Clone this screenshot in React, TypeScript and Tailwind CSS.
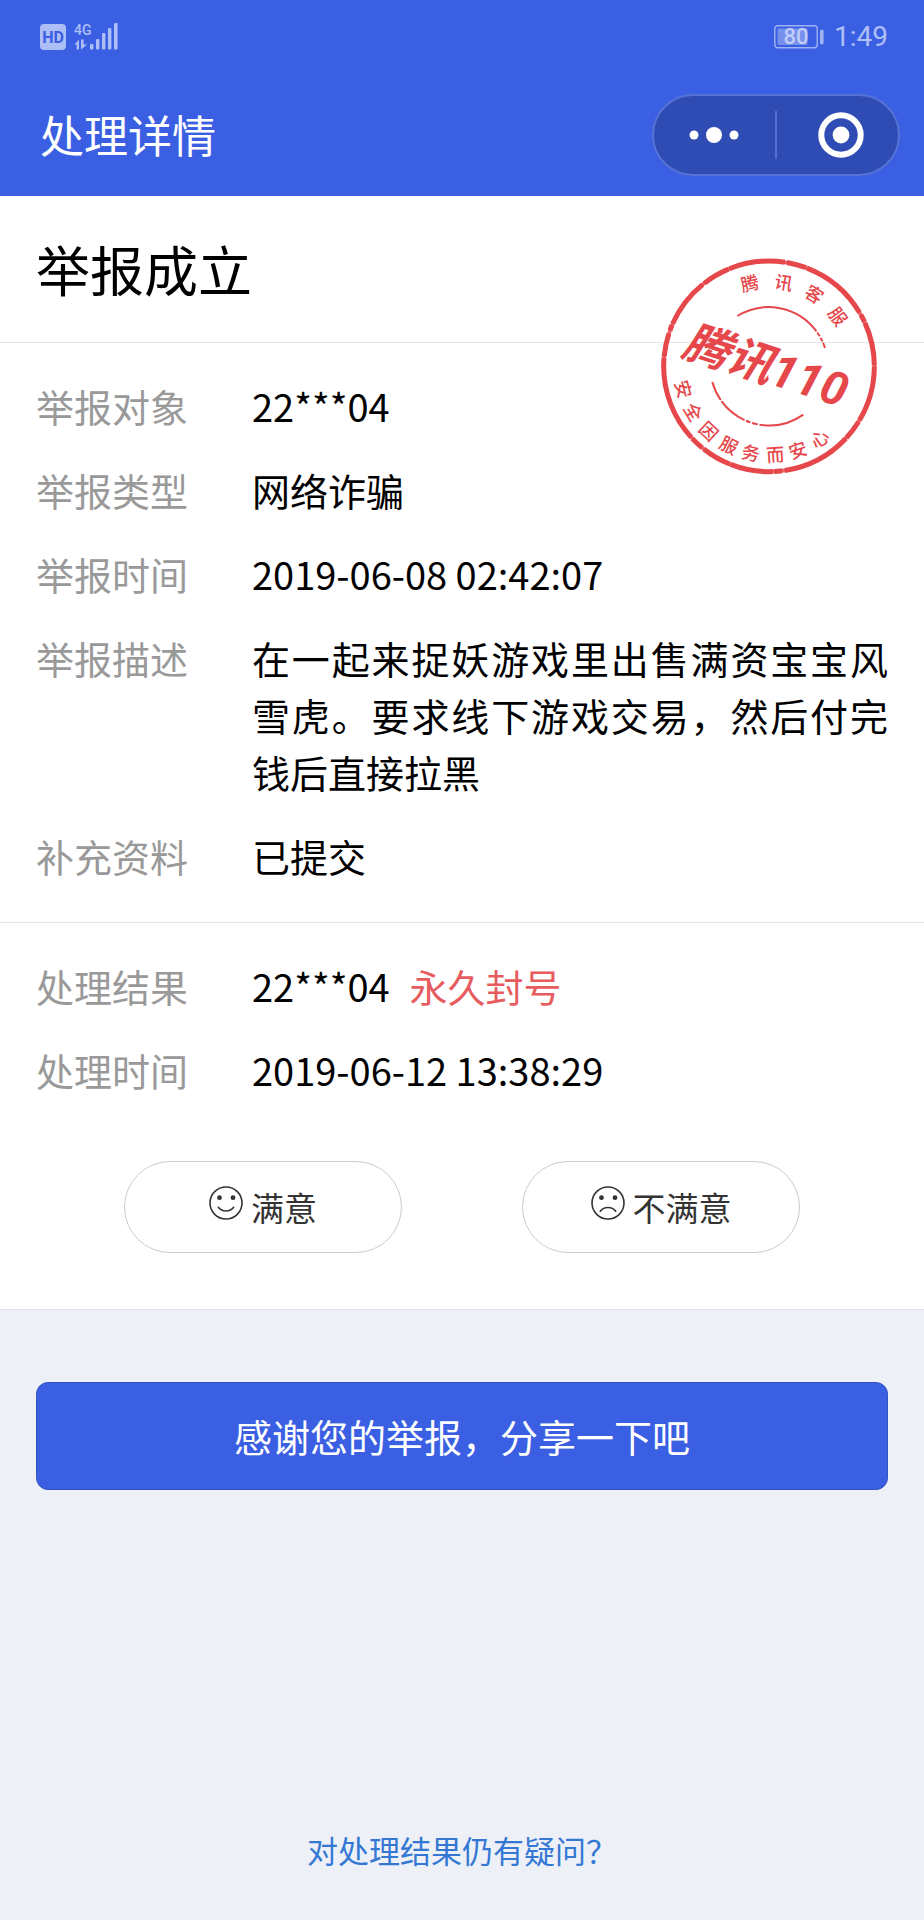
import type { ReactNode } from 'react'

interface Field {
  label: string
  value: ReactNode
}

interface StampChar {
  char: string
  angle: number
}

const reportFields: Field[] = [
  { label: '举报对象', value: '22***04' },
  { label: '举报类型', value: '网络诈骗' },
  { label: '举报时间', value: '2019-06-08 02:42:07' },
  { label: '举报描述', value: '在一起来捉妖游戏里出售满资宝宝风雪虎。要求线下游戏交易，然后付完钱后直接拉黑' },
  { label: '补充资料', value: '已提交' },
]

const resultFields: Field[] = [
  {
    label: '处理结果',
    value: (
      <>
        22***04<span className="ml-5 text-[#e65c5f]">永久封号</span>
      </>
    ),
  },
  { label: '处理时间', value: '2019-06-12 13:38:29' },
]

// Angles are degrees clockwise from the top of the seal
const stampTop: StampChar[] = [
  { char: '腾', angle: -13 },
  { char: '讯', angle: 10 },
  { char: '客', angle: 32 },
  { char: '服', angle: 54 },
]

// Angles are degrees clockwise from the bottom of the seal
const stampBottom: StampChar[] = [
  { char: '安', angle: 75 },
  { char: '全', angle: 59 },
  { char: '因', angle: 43 },
  { char: '服', angle: 27 },
  { char: '务', angle: 12 },
  { char: '而', angle: -4 },
  { char: '安', angle: -19 },
  { char: '心', angle: -35 },
]

function SignalIcon() {
  return (
    <svg viewBox="0 0 80 28" className="w-20 h-7" fill="#adbdf5" aria-hidden="true">
      <rect x="0" y="1" width="26" height="26" rx="4" />
      <text x="13" y="20" textAnchor="middle" fontFamily="Roboto" fontSize="16" fontWeight="700" fill="#3a5fe3">HD</text>
      <text x="34" y="12" fontFamily="Roboto" fontSize="14" fontWeight="500">4G</text>
      <path d="M34.5 21.5 39 16.5v10h-2.4v-5zM41 16.5v10l6.2-5h-3.6v-5z" />
      <rect x="50" y="21" width="3.4" height="5.5" rx="1" />
      <rect x="56" y="16" width="3.4" height="10.5" rx="1" />
      <rect x="62" y="10" width="3.4" height="16.5" rx="1" />
      <rect x="68" y="5" width="3.4" height="21.5" rx="1" />
      <rect x="74" y="0" width="3.6" height="26.5" rx="1" />
    </svg>
  )
}

function BatteryIcon() {
  return (
    <svg viewBox="0 0 50 24" className="w-[50px] h-6" aria-hidden="true">
      <rect x="0.8" y="0.8" width="42.4" height="22" rx="3" fill="none" stroke="#9fb2f3" strokeWidth="1.4" />
      <rect x="3.5" y="3.5" width="30" height="16.5" rx="1" fill="#7790eb" />
      <rect x="46" y="4.5" width="3.6" height="15" rx="1.8" fill="#9fb2f3" />
      <text x="22" y="19.4" textAnchor="middle" fontFamily="Roboto" fontSize="22" fontWeight="500" fill="#c0cdf8">80</text>
    </svg>
  )
}

function FaceIcon({ happy }: { happy: boolean }) {
  return (
    <svg viewBox="0 0 34 34" className="w-[34px] h-[34px] mb-2" fill="none" stroke="#333" strokeWidth="1.6" aria-hidden="true">
      <circle cx="17" cy="17" r="16" />
      <circle cx="10.5" cy="11.7" r="2.4" fill="#333" stroke="none" />
      <circle cx="24" cy="11.7" r="2.4" fill="#333" stroke="none" />
      <path d={happy ? 'M9.3 21.3c3.8 5 11.6 5 15.4 0' : 'M9.3 25.3c3.8-5 11.6-5 15.4 0'} strokeLinecap="round" />
    </svg>
  )
}

function Stamp() {
  return (
    <svg
      viewBox="57 49 660 660"
      className="absolute right-11 top-[60px] w-[220px] h-[220px]"
      fill="#e5474b"
      fontFamily='"Noto Sans CJK SC", sans-serif'
      role="img"
      aria-label="腾讯110"
    >
      <g transform="translate(384 380)">
        <g fill="none" stroke="#e5474b">
          <circle r="316" strokeWidth="11" opacity="0.85" />
          <circle r="316" strokeWidth="15" strokeDasharray="170 5 60 3 210 8 24 4 130 3 90 6 40 5 260 4 70 9 18 4 150 5 85 3" />
          <path d="M-95-151A178 178 0 0 1 168-55" strokeWidth="6" strokeDasharray="265 4 14 5 12 4 40" />
          <path d="M-170 47A177 177 0 0 0 103 145" strokeWidth="6" strokeDasharray="60 4 90 5 14 5 18 5 200" />
        </g>
        {stampTop.map(({ char, angle }) => (
          <text key={char} transform={`rotate(${angle})`} y="-235" textAnchor="middle" fontSize="54" fontWeight="500">
            {char}
          </text>
        ))}
        {stampBottom.map(({ char, angle }) => (
          <text key={angle} transform={`rotate(${angle})`} y="286" textAnchor="middle" fontSize="54" fontWeight="500">
            {char}
          </text>
        ))}
        <text transform="rotate(18)" x="-10" y="50" textAnchor="middle" fontSize="138" fontWeight="700" fontStyle="italic">
          腾讯
          <tspan fontFamily="Roboto" fontSize="140">110</tspan>
        </text>
      </g>
    </svg>
  )
}

function FieldList({ fields }: { fields: Field[] }) {
  return (
    <dl className="flex flex-col gap-[27px] text-[38px] leading-[57px]">
      {fields.map(({ label, value }) => (
        <div key={label} className="flex">
          <dt className="w-54 shrink-0 text-[#999]">{label}</dt>
          <dd className="flex-1 text-justify text-black">{value}</dd>
        </div>
      ))}
    </dl>
  )
}

export default function App() {
  return (
    <div lang="zh-CN" className="flex min-h-screen flex-col bg-[#edf0f7] font-['Noto_Sans_CJK_SC',sans-serif]">
      <header className="bg-[#3a5fe3]">
        {/* Status bar */}
        <div className="flex h-[74px] items-center justify-between pl-10 pr-9">
          <SignalIcon />
          <div className="flex items-center gap-2.5">
            <BatteryIcon />
            <span className="font-[Roboto,sans-serif] text-[28px] leading-8 text-[#b0c0f6]">1:49</span>
          </div>
        </div>

        {/* Title bar */}
        <div className="flex h-[122px] items-center justify-between pl-10 pr-6">
          <h1 className="pb-0.5 text-[44px] leading-14 text-white">处理详情</h1>
          <div className="flex h-[82px] w-[248px] items-center rounded-full border-2 border-[#5672d4] bg-[#2f4bb4]">
            <button type="button" aria-label="更多" className="flex w-1/2 justify-center">
              <svg viewBox="0 0 50 16" className="w-[50px] h-4" fill="#fff">
                <circle cx="5" cy="8" r="4.5" />
                <circle cx="25" cy="8" r="8" />
                <circle cx="45" cy="8" r="4.5" />
              </svg>
            </button>
            <div className="h-12 w-0.5 bg-[#5570d2]" />
            <button type="button" aria-label="关闭" className="flex w-1/2 justify-center pl-2">
              <svg viewBox="0 0 46 46" className="w-[46px] h-[46px]">
                <circle cx="23" cy="23" r="19.7" fill="none" stroke="#fff" strokeWidth="6" />
                <circle cx="23" cy="23" r="8.4" fill="#fff" />
              </svg>
            </button>
          </div>
        </div>
      </header>

      <main className="relative border-b border-[#e2e3e6] bg-white">
        <h2 className="border-b border-[#e5e5e5] px-9 py-9 text-[54px] leading-[74px] text-black">举报成立</h2>

        <section className="border-b border-[#e5e5e5] px-9 pt-[34px] pb-[38px]">
          <FieldList fields={reportFields} />
        </section>

        <section className="px-9 pt-[34px] pb-14">
          <FieldList fields={resultFields} />
          <div className="mt-[63px] flex gap-30 px-22 text-[33px] leading-12 text-[#333]">
            <button type="button" className="flex h-[92px] flex-1 items-center justify-center gap-2 rounded-full border border-[#ccc]">
              <FaceIcon happy />
              满意
            </button>
            <button type="button" className="flex h-[92px] flex-1 items-center justify-center gap-2 rounded-full border border-[#ccc]">
              <FaceIcon happy={false} />
              不满意
            </button>
          </div>
        </section>

        <Stamp />
      </main>

      <div className="px-9 pt-18">
        <button type="button" className="h-27 w-full rounded-xl border border-[#3453c4] bg-[#3a5fe3] text-[38px] leading-14 text-white">
          感谢您的举报，分享一下吧
        </button>
      </div>

      <footer className="mt-auto pb-12 text-center">
        <a href="#appeal" className="text-[31px] leading-11 text-[#3478d4]">对处理结果仍有疑问？</a>
      </footer>
    </div>
  )
}
